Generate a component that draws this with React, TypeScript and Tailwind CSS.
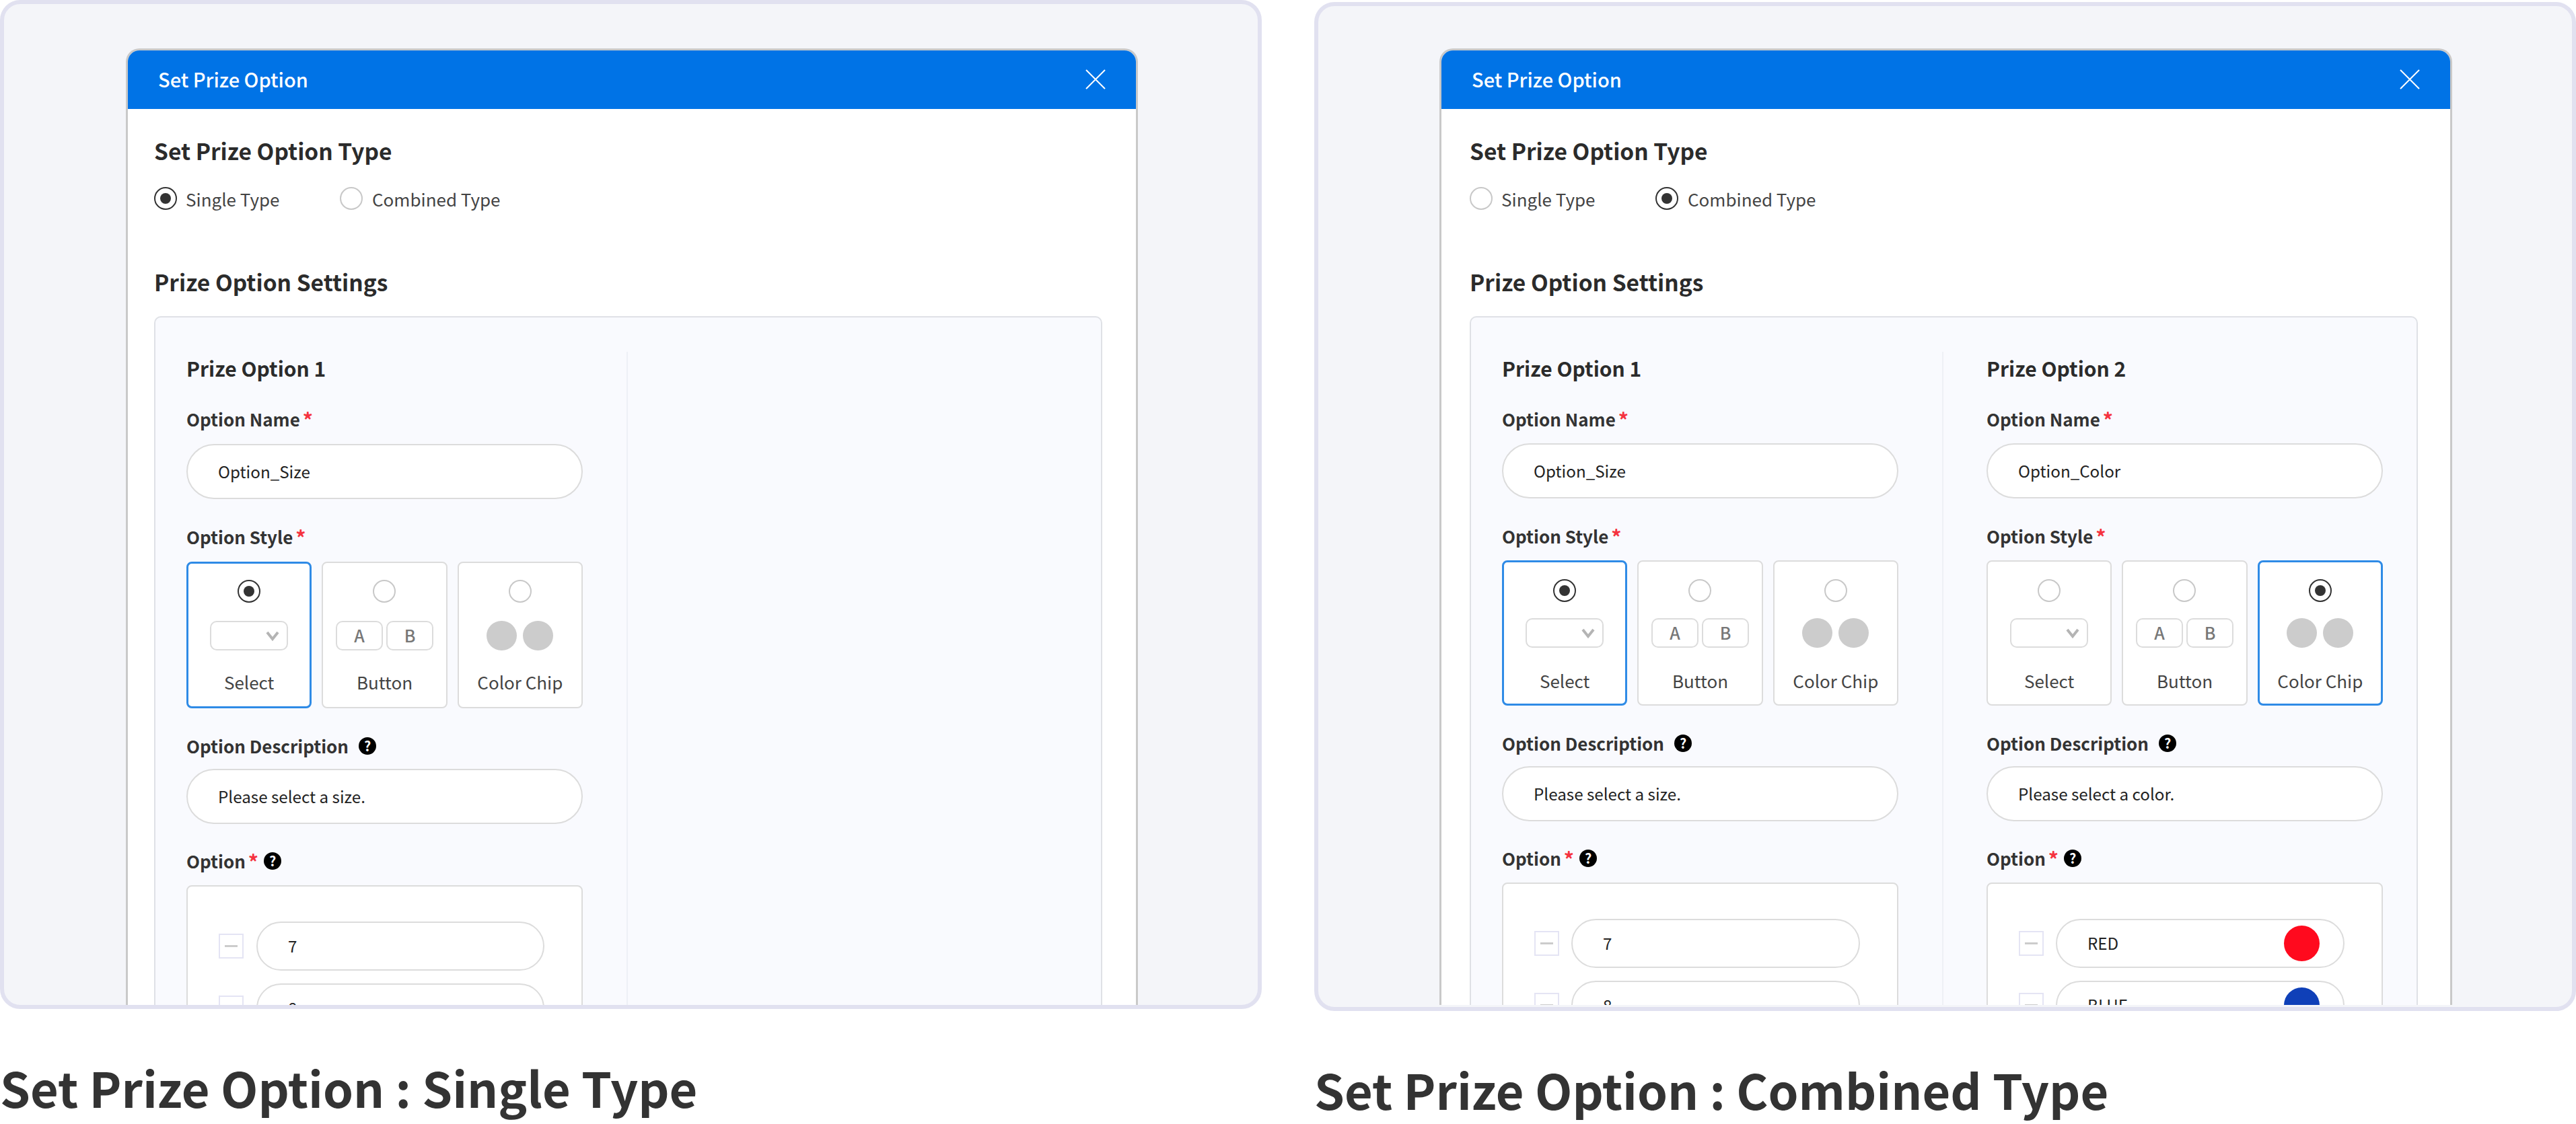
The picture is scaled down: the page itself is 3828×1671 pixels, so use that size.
import clsx from "clsx";

type StyleKind = "select" | "button" | "chip";

interface OptionItem {
  label: string;
  color?: string;
}

interface PrizeColumnProps {
  title: string;
  name: string;
  description: string;
  style: StyleKind;
  items: OptionItem[];
  compact: boolean;
}

function Radio({ checked, className }: { checked: boolean; className?: string }) {
  return (
    <span
      className={clsx(
        "flex shrink-0 items-center justify-center rounded-full border-2 bg-white",
        checked ? "border-[#333333]" : "border-[#c8c8c8]",
        className,
      )}
    >
      {checked && <span className="h-[16px] w-[16px] rounded-full bg-[#333333]" />}
    </span>
  );
}

function HelpIcon() {
  return (
    <span className="flex h-[26px] w-[26px] shrink-0 items-center justify-center rounded-full bg-black text-[20px] leading-none font-bold text-white">
      ?
    </span>
  );
}

function Star() {
  return <span className="ml-[4px] text-[30px] text-[#f5333f]">*</span>;
}

function FieldLabel({ children, className }: { children: React.ReactNode; className?: string }) {
  return (
    <div className={clsx("flex h-[40px] items-center text-[26px] leading-[40px] font-bold text-[#333333]", className)}>
      {children}
    </div>
  );
}

function TextField({ value, className }: { value: string; className?: string }) {
  return (
    <div
      className={clsx(
        "flex h-[82px] items-center rounded-full border-2 border-[#dcdcdc] bg-white pl-[45px] text-[24.2px] text-[#222222]",
        className,
      )}
    >
      {value}
    </div>
  );
}

function StylePreview({ kind }: { kind: StyleKind }) {
  if (kind === "select") {
    return (
      <div className="flex h-[44px] w-[116px] items-center justify-end rounded-[10px] border-2 border-[#dcdcdc] pr-[11px]">
        <svg width="20" height="15" viewBox="0 0 20 15" fill="none">
          <path d="M2 2l8 10 8-10" stroke="#b4b4b4" strokeWidth="4" />
        </svg>
      </div>
    );
  }
  if (kind === "button") {
    return (
      <div className="flex gap-[5px] text-[25px] font-medium text-[#777777]">
        <span className="flex h-[44px] w-[70px] items-center justify-center rounded-[10px] border-2 border-[#dcdcdc]">A</span>
        <span className="flex h-[44px] w-[70px] items-center justify-center rounded-[10px] border-2 border-[#dcdcdc]">B</span>
      </div>
    );
  }
  return (
    <div className="flex gap-[9px]">
      <span className="h-[44px] w-[45px] rounded-full bg-[#cccccc]" />
      <span className="h-[44px] w-[45px] rounded-full bg-[#cccccc]" />
    </div>
  );
}

const STYLES: { kind: StyleKind; label: string }[] = [
  { kind: "select", label: "Select" },
  { kind: "button", label: "Button" },
  { kind: "chip", label: "Color Chip" },
];

function PrizeColumn({ title, name, description, style, items, compact }: PrizeColumnProps) {
  return (
    <div className="flex w-[589px] shrink-0 flex-col">
      <div className="h-[48px] text-[30px] leading-[48px] font-bold text-[#2b2b2b]">{title}</div>
      <FieldLabel className="mt-[32px] mb-[2px]">
        Option Name
        <Star />
      </FieldLabel>
      <TextField value={name} className={compact ? "mt-[14px]" : "mt-[15px]"} />
      <FieldLabel className={compact ? "mt-[36px] mb-[1px]" : "mt-[36px] mb-[2px]"}>
        Option Style
        <Star />
      </FieldLabel>
      <div className="mt-[15px] grid grid-cols-3 gap-[15px]">
        {STYLES.map((s) => (
          <div
            key={s.kind}
            className={clsx(
              "flex flex-col items-center rounded-[8px] bg-white",
              compact ? "h-[216px]" : "h-[218px]",
              s.kind === style
                ? clsx("border-[3px] border-[#2f8be6]", compact ? "pt-[25px]" : "pt-[24px]")
                : clsx("border-2 border-[#dcdcdc]", compact ? "pt-[26px]" : "pt-[25px]"),
            )}
          >
            <Radio checked={s.kind === style} className="h-[34px] w-[34px]" />
            <div className={clsx("flex h-[44px] items-center", compact ? "mt-[24px]" : "mt-[27px]")}>
              <StylePreview kind={s.kind} />
            </div>
            <div className={clsx("h-[40px] text-[26px] leading-[40px] text-[#444444]", compact ? "mt-[29px]" : "mt-[27px]")}>
              {s.label}
            </div>
          </div>
        ))}
      </div>
      <FieldLabel className="mt-[36px] mb-[2px] gap-[15px]">
        Option Description
        <HelpIcon />
      </FieldLabel>
      <TextField value={description} className="mt-[12px]" />
      <FieldLabel className="mt-[35px] mb-[1px]">
        Option
        <Star />
        <span className="ml-[8px]">
          <HelpIcon />
        </span>
      </FieldLabel>
      <div className="mt-[15px] flex flex-col gap-[19px] rounded-[8px] border-2 border-[#dcdcdc] bg-white pt-[52px] pr-[55px] pb-[40px] pl-[46px]">
        {items.map((item) => (
          <div key={item.label} className={clsx("flex items-center", compact ? "gap-[18px]" : "gap-[19px]")}>
            <span className="flex h-[37px] w-[37px] shrink-0 items-center justify-center border-2 border-[#e4e4f4] bg-white">
              <span className="h-[3px] w-[19px] bg-[#cccccc]" />
            </span>
            <div className="flex h-[73px] flex-1 items-center justify-between rounded-full border-2 border-[#dcdcdc] bg-white pr-[35px] pl-[45px] text-[24.2px] text-[#222222]">
              {item.label}
              {item.color && (
                <span className="h-[53px] w-[53px] rounded-full" style={{ backgroundColor: item.color }} />
              )}
            </div>
          </div>
        ))}
      </div>
    </div>
  );
}

function PrizeFigure({ combined }: { combined: boolean }) {
  const sizes: OptionItem[] = [{ label: "7" }, { label: "8" }];
  const colors: OptionItem[] = [
    { label: "RED", color: "#ff0a1e" },
    { label: "BLUE", color: "#0f40b8" },
  ];

  return (
    <div className={clsx("w-[1875px] shrink-0", combined && "mt-[3px]")}>
      <div
        className={clsx(
          "h-[1500px] overflow-hidden rounded-[30px] border-[6px] border-[#e1e1f0] bg-[#f4f5f9]",
          combined ? "pt-[63px]" : "pt-[66px]",
        )}
      >
        <div
          className={clsx(
            "h-[1422px] overflow-hidden rounded-t-[20px] border-x-[3px] border-t-[3px] border-[#c9c9c9] bg-white",
            combined ? "ml-[180px] w-[1505px]" : "ml-[181px] w-[1504px]",
          )}
        >
          <div className="flex h-[87px] items-center justify-between bg-[#0073e6] px-[45px] pb-[2px] text-[29px] font-medium text-white">
            Set Prize Option
            <svg width="30" height="30" viewBox="0 0 30 30" fill="none">
              <path d="M1 1l28 28M29 1L1 29" stroke="white" strokeWidth="2" />
            </svg>
          </div>
          <div className={combined ? "pl-[42px]" : "pl-[39px]"}>
            <h2 className="mt-[37px] h-[50px] text-[33.5px] leading-[50px] font-bold text-[#2b2b2b]">Set Prize Option Type</h2>
            <div className="mt-[28px] flex h-[36px] items-center text-[26px] text-[#444444]">
              <Radio checked={!combined} className="h-[34px] w-[34px]" />
              <span className="ml-[13px] w-[229px]">Single Type</span>
              <Radio checked={combined} className="h-[34px] w-[34px]" />
              <span className="ml-[14px]">Combined Type</span>
            </div>
            <h2 className="mt-[81px] h-[50px] text-[33.5px] leading-[50px] font-bold text-[#2b2b2b]">Prize Option Settings</h2>
            <div className="mt-[26px] w-[1409px] rounded-[10px] border-2 border-[#dfe1e6] bg-[#f9fafe] pt-[51px] pl-[46px]">
              <div className="flex">
                <PrizeColumn
                  title="Prize Option 1"
                  name="Option_Size"
                  description="Please select a size."
                  style="select"
                  items={sizes}
                  compact={combined}
                />
                <div className="ml-[65px] mr-[64px] w-[2px] shrink-0 bg-[#eef0f6]" />
                {combined && (
                  <PrizeColumn
                    title="Prize Option 2"
                    name="Option_Color"
                    description="Please select a color."
                    style="chip"
                    items={colors}
                    compact={combined}
                  />
                )}
              </div>
            </div>
          </div>
        </div>
      </div>
      <div className="mt-[66px] h-[100px] text-[72px] leading-[100px] font-bold whitespace-nowrap text-[#333333]">
        {combined ? "Set Prize Option : Combined Type" : "Set Prize Option : Single Type"}
      </div>
    </div>
  );
}

export default function App() {
  return (
    <div className="flex h-[1671px] w-[3828px] gap-[78px] overflow-hidden bg-white font-['Noto_Sans_CJK_KR','Noto_Sans',sans-serif]">
      <PrizeFigure combined={false} />
      <PrizeFigure combined={true} />
    </div>
  );
}
